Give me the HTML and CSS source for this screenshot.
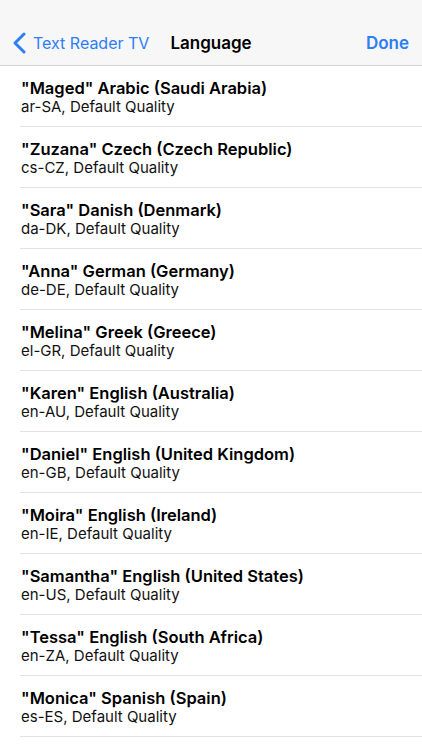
FILE: index.html
```html
<!DOCTYPE html>
<html>
<head>
<meta charset="utf-8">
<link rel="stylesheet" href="styles.css">
</head>
<body>
<div class="app">
  <header class="navbar">
    <div class="nav-row">
      <a class="back">
        <svg class="chev" width="13" height="22" viewBox="0 0 13 22"><path d="M11 2 L2 11 L11 20" fill="none" stroke="#2d7ef7" stroke-width="3" stroke-linecap="round" stroke-linejoin="round"/></svg>
        <span>Text Reader TV</span>
      </a>
      <div class="title">Language</div>
      <a class="done">Done</a>
    </div>
  </header>
  <ul class="list">
    <li class="item"><div class="name">"Maged" Arabic (Saudi Arabia)</div><div class="sub">ar-SA, Default Quality</div></li>
    <li class="item"><div class="name">"Zuzana" Czech (Czech Republic)</div><div class="sub">cs-CZ, Default Quality</div></li>
    <li class="item"><div class="name">"Sara" Danish (Denmark)</div><div class="sub">da-DK, Default Quality</div></li>
    <li class="item"><div class="name">"Anna" German (Germany)</div><div class="sub">de-DE, Default Quality</div></li>
    <li class="item"><div class="name">"Melina" Greek (Greece)</div><div class="sub">el-GR, Default Quality</div></li>
    <li class="item"><div class="name">"Karen" English (Australia)</div><div class="sub">en-AU, Default Quality</div></li>
    <li class="item"><div class="name">"Daniel" English (United Kingdom)</div><div class="sub">en-GB, Default Quality</div></li>
    <li class="item"><div class="name">"Moira" English (Ireland)</div><div class="sub">en-IE, Default Quality</div></li>
    <li class="item"><div class="name">"Samantha" English (United States)</div><div class="sub">en-US, Default Quality</div></li>
    <li class="item"><div class="name">"Tessa" English (South Africa)</div><div class="sub">en-ZA, Default Quality</div></li>
    <li class="item"><div class="name">"Monica" Spanish (Spain)</div><div class="sub">es-ES, Default Quality</div></li>
  </ul>
</div>
</body>
</html>
```
FILE: styles.css
```css
html, body { margin: 0; padding: 0; background: #fff; }
body { font-family: Inter, "Noto Sans", sans-serif; color: #000; overflow: hidden; }
.app { width: 422px; height: 750px; overflow: hidden; }
.navbar { background: #f7f7f7; border-bottom: 1px solid #d2d2d2; height: 45px; padding-top: 20px; }
.nav-row { height: 45px; display: flex; align-items: center; padding: 0 13px; }
.back { display: flex; align-items: center; color: #2d7ef7; font-size: 16px; gap: 7px; }
.chev { display: block; }
.title { font-size: 17px; font-weight: 600; margin-left: 21px; flex: 1; }
.done { color: #2d7ef7; font-size: 17px; font-weight: 600; }
.list { list-style: none; margin: 0; padding: 0; }
.item { height: 61px; border-bottom: 1px solid #e2e2e2; margin-left: 20px; padding: 12px 0 0 1px; box-sizing: border-box; }
.name { font-size: 16.5px; font-weight: 600; line-height: 20px; }
.sub { font-size: 15px; line-height: 17px; color: #111; }
```
